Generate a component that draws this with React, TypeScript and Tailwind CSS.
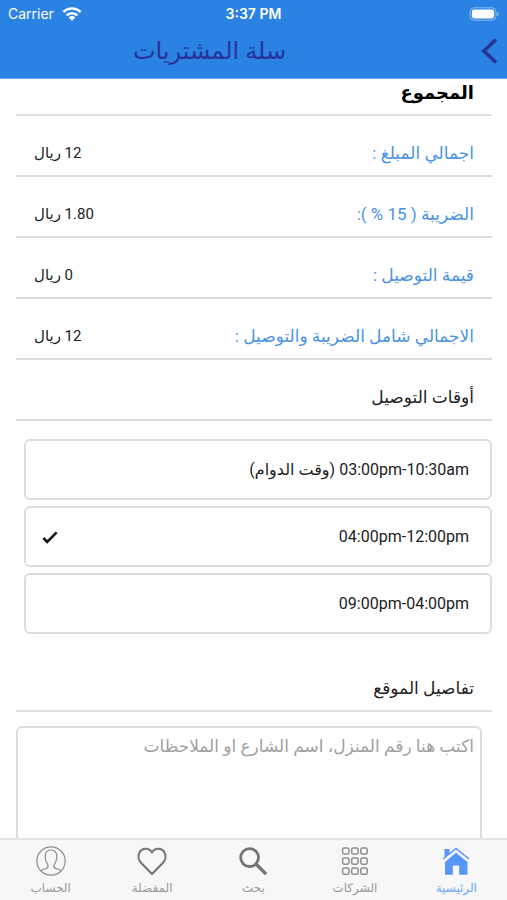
import React, { useState } from "react";

const totals = [
  { label: "اجمالي المبلغ :", value: "12 ريال" },
  { label: "الضريبة ( 15 % ):", value: "1.80 ريال" },
  { label: "قيمة التوصيل :", value: "0 ريال" },
  { label: "الاجمالي شامل الضريبة والتوصيل :", value: "12 ريال" },
];

const times = [
  { id: "morning", label: "03:00pm-10:30am (وقت الدوام)" },
  { id: "noon", label: "04:00pm-12:00pm" },
  { id: "evening", label: "09:00pm-04:00pm" },
];

function HomeIcon() {
  return (
    <svg width="30" height="30" viewBox="0 0 30 30" fill="#5596f8">
      <path d="M3.5 3h5v4.2l-5 4z" />
      <path d="M15 6.800 26.500 16v12.800h-8.300v-9.400h-6.400v9.400H4V16z" />
      <path d="M2 13 15 2.400 28 13" fill="none" stroke="#5596f8" strokeWidth="1.500" />
    </svg>
  );
}

function GridIcon() {
  return (
    <svg width="30" height="30" viewBox="0 0 30 30" fill="none" stroke="#8e8e8e" strokeWidth="1.5">
      {[1.9, 12, 22.1].map((y) =>
        [2.6, 11.7, 20.8].map((x) => (
          <rect key={`${x}-${y}`} x={x} y={y} width="6.4" height="6.2" rx="1.6" />
        ))
      )}
    </svg>
  );
}

function SearchIcon() {
  return (
    <svg width="30" height="30" viewBox="0 0 30 30" fill="none" stroke="#757575">
      <circle cx="11.6" cy="11.6" r="8.900" strokeWidth="2.8" />
      <path d="m18.2 18.2 9.900 9.900" strokeWidth="3.4" />
    </svg>
  );
}

function HeartIcon() {
  return (
    <svg width="30" height="30" viewBox="0 0 30 30" fill="none" stroke="#757575" strokeWidth="2.1" strokeLinejoin="round">
      <path d="M15 28 4.2 17C1.4 14.2.8 9.7 2.6 6.3 5 1.9 11.8 1.4 15 6.4c3.2-5 10-4.5 12.4-.1 1.8 3.4 1.2 7.9-1.6 10.7z" />
    </svg>
  );
}

function AccountIcon() {
  return (
    <svg width="30" height="30" viewBox="0 0 30 30" fill="none" stroke="#8e8e8e" strokeWidth="1.2">
      <circle cx="15" cy="15" r="14.2" />
      <path d="M5 24.8c1.200-1.200 3.200-1.600 5-2.200 1.900-.7 2.500-1.600 2-3.400-.2-.8-.8-1.500-1.300-2.500-.8-1.700-1.500-3.500-1.500-6C9.200 6.600 11.400 4 15 4s5.800 2.600 5.800 6.700c0 2.500-.7 4.300-1.500 6-.5 1-1.100 1.700-1.300 2.500-.5 1.800.1 2.700 2 3.400 1.800.6 3.800 1 5 2.200" />
    </svg>
  );
}

const tabs = [
  { id: "home", label: "الرئيسية", icon: <HomeIcon />, color: "text-[#6ba6f8]" },
  { id: "companies", label: "الشركات", icon: <GridIcon />, color: "text-[#999999]" },
  { id: "search", label: "بحث", icon: <SearchIcon />, color: "text-[#999999]" },
  { id: "favorites", label: "المفضلة", icon: <HeartIcon />, color: "text-[#999999]" },
  { id: "account", label: "الحساب", icon: <AccountIcon />, color: "text-[#999999]" },
];

function StatusBar() {
  return (
    <div dir="ltr" className="grid h-7 grid-cols-3 items-center px-2 text-sm text-white font-[Inter,sans-serif]">
      <div className="flex items-center gap-2">
        <span>Carrier</span>
        <svg width="20" height="16" viewBox="0 0 20 16" fill="none" stroke="#fff" strokeWidth="2.6">
          <path d="M1.4 6a12.3 12.3 0 0 1 17.2 0" />
          <path d="M4.6 9.4a7.7 7.7 0 0 1 10.8 0" />
          <path d="M10 14.8 6.7 11.4a4.7 4.7 0 0 1 6.6 0z" fill="#fff" stroke="none" />
        </svg>
      </div>
      <span className="text-center font-semibold">3:37 PM</span>
      <svg className="justify-self-end" width="30" height="14" viewBox="0 0 30 14">
        <rect x="1" y="0.8" width="26" height="12.4" rx="4" fill="none" stroke="#fff" strokeOpacity="0.45" />
        <rect x="2.8" y="2.5" width="22.4" height="9" rx="2.4" fill="#fff" />
        <path d="M28.2 5v4.2c1.8-.7 1.8-3.5 0-4.2z" fill="#fff" fillOpacity="0.5" />
      </svg>
    </div>
  );
}

export default function App() {
  const [time, setTime] = useState("noon");
  const [details, setDetails] = useState("");

  return (
    <div
      dir="rtl"
      className="flex h-screen w-full flex-col bg-white text-[#222222] font-[Roboto,'DejaVu_Sans',sans-serif]"
    >
      {/* Header */}
      <header className="shrink-0 border-b border-[#5fa4ee] bg-[#2a82e2]">
        <StatusBar />
        <div className="flex h-[50px] items-center px-2 pb-1">
          <button type="button" aria-label="رجوع" className="cursor-pointer text-[#27349c]">
            <svg width="20" height="28" viewBox="0 0 20 28" fill="none" stroke="currentColor" strokeWidth="3.6">
              <path d="M17 2.5 5 14l12 11.5" />
            </svg>
          </button>
          <h1 className="flex-1 pr-17 text-center text-2xl font-medium text-[#27349c]">
            سلة المشتريات
          </h1>
        </div>
      </header>

      {/* Cart summary */}
      <main className="min-h-0 flex-1 overflow-y-auto pr-[15px] pl-4 [scrollbar-width:none]">
        <h2 className="flex h-[37px] items-center border-b-2 border-[#e0e0e0] px-[18px] pb-2 text-lg font-bold text-black">
          المجموع
        </h2>

        <dl>
          {totals.map((row) => (
            <div
              key={row.label}
              className="flex h-[61px] items-end justify-between border-b-2 border-[#dddddd] px-[18px] pb-2 leading-7"
            >
              <dt className="text-[17px] text-[#4a93e4]">{row.label}</dt>
              <dd className="text-[15px]">{row.value}</dd>
            </div>
          ))}
        </dl>

        <fieldset>
          <legend className="flex h-[61px] w-full items-end border-b-2 border-[#dddddd] px-[18px] pb-2 text-[17px] leading-7">
            أوقات التوصيل
          </legend>
          <div className="mt-[18px] ml-2 flex flex-col gap-1.5">
            {times.map((item) => (
              <label
                key={item.id}
                className="flex h-[61px] cursor-pointer items-center justify-between rounded-md border-2 border-[#dddddd] pr-[21px] pl-4"
              >
                <input
                  type="radio"
                  name="time"
                  value={item.id}
                  checked={time === item.id}
                  onChange={() => setTime(item.id)}
                  className="sr-only"
                />
                <span className="text-base">{item.label}</span>
                {time === item.id && (
                  <svg width="16" height="14" viewBox="0 0 16 14" fill="none" stroke="#111" strokeWidth="2.6">
                    <path d="m1.4 8 3.8 3.8L14.6 2.4" />
                  </svg>
                )}
              </label>
            ))}
          </div>
        </fieldset>

        <label
          htmlFor="details"
          className="flex h-[78px] items-end border-b-2 border-[#e0e0e0] px-[18px] pb-2 text-[17px] leading-7"
        >
          تفاصيل الموقع
        </label>
        <div className="mt-3.5 pr-2.5">
          <textarea
            id="details"
            value={details}
            onChange={(e) => setDetails(e.target.value)}
            placeholder="اكتب هنا رقم المنزل، اسم الشارع او الملاحظات"
            className="block h-32 w-full resize-none rounded-md border-2 border-[#dddddd] px-1.5 py-1 text-[17px] leading-7 placeholder-[#a0a0a0] outline-none"
          />
        </div>
      </main>

      {/* Bottom tabs */}
      <nav className="flex h-[62px] shrink-0 border-t-2 border-[#e4e4e4] bg-[#f7f7f7]">
        {tabs.map((tab) => (
          <a key={tab.id} href={`#${tab.id}`} className="flex flex-1 flex-col items-center gap-1 pt-1.5">
            {tab.icon}
            <span className={`text-xs ${tab.color}`}>{tab.label}</span>
          </a>
        ))}
      </nav>
    </div>
  );
}
